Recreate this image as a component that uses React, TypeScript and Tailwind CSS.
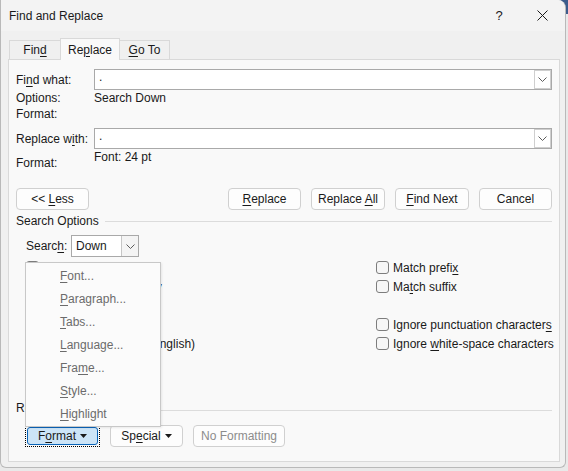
import React from "react";

const font = { fontFamily: '"Liberation Sans", Arial, sans-serif' };

function U({ children }: { children: React.ReactNode }) {
  return <span className="underline underline-offset-2">{children}</span>;
}

function Chevron() {
  return (
    <svg width="9" height="5" viewBox="0 0 9 5" className="text-[#5c5c5c]">
      <path d="M0.5 0.5 L4.5 4.5 L8.5 0.5" fill="none" stroke="currentColor" strokeWidth="1" />
    </svg>
  );
}

function ComboInput() {
  return (
    <div className="flex-1 h-[21px] bg-white border border-[#a9a9a9] flex items-center">
      <span className="flex-1 pl-[4px] leading-none pb-[6px]">.</span>
      <div className="w-[17px] h-[19px] border border-[#cfcfcf] bg-white flex items-center justify-center">
        <Chevron />
      </div>
    </div>
  );
}

function Btn({
  children,
  w,
  className = "",
}: {
  children: React.ReactNode;
  w: string;
  className?: string;
}) {
  return (
    <div
      className={`${w} h-[22px] rounded-[4px] border border-[#d0d0d0] bg-[#fdfdfd] flex items-center justify-center whitespace-pre ${className}`}
    >
      <span className="flex items-center">{children}</span>
    </div>
  );
}

function Check({ children }: { children: React.ReactNode }) {
  return (
    <div className="h-[19px] flex items-center gap-[4px] whitespace-nowrap">
      <div className="w-[13px] h-[13px] shrink-0 rounded-[3px] border border-[#7d7d7d] bg-[#f6f6f6]" />
      <span>{children}</span>
    </div>
  );
}

function Caret() {
  return (
    <svg width="7" height="4" viewBox="0 0 7 4" className="ml-[4px]">
      <path d="M0 0 H7 L3.5 4 Z" fill="#1a1a1a" />
    </svg>
  );
}

const menuItems: [string, string, string][] = [
  ["", "F", "ont..."],
  ["", "P", "aragraph..."],
  ["", "T", "abs..."],
  ["", "L", "anguage..."],
  ["Fra", "m", "e..."],
  ["", "S", "tyle..."],
  ["", "H", "ighlight"],
];

export default function App() {
  return (
    <div
      className="w-[568px] h-[471px] bg-[linear-gradient(to_bottom,#3b5c8c_0px,#3b5c8c_14px,#e9e9e9_14px)] text-[12px] text-[#1a1a1a] overflow-hidden"
      style={font}
    >
      <div className="w-[566px] h-[468px] bg-[#f0f0f0] border-l border-r border-b border-[#b9b9b9] rounded-tr-[8px] rounded-b-[6px] flex flex-col overflow-hidden">
        {/* title bar */}
        <div className="h-[31px] bg-[#f3f3f3] flex items-center pl-[8px] shrink-0">
          <span className="flex-1 text-[12px]">Find and Replace</span>
          <span className="w-[20px] text-center text-[13px] mr-[28px]">?</span>
          <svg width="11" height="11" viewBox="0 0 11 11" className="mr-[17px]">
            <path d="M0.5 0.5 L10.5 10.5 M10.5 0.5 L0.5 10.5" stroke="#1a1a1a" strokeWidth="1" />
          </svg>
        </div>

        {/* tabs */}
        <div className="flex pl-[8px] pt-[7px] items-start h-[28px] shrink-0">
          <div className="w-[51px] mt-[2px] h-[20px] border border-r-0 border-[#d9d9d9] flex items-center justify-center">
            <span>
              Fin<U>d</U>
            </span>
          </div>
          <div className="w-[60px] h-[22px] border border-b-0 border-[#d9d9d9] bg-[#f9f9f9] flex items-center justify-center relative z-10">
            <span>
              Re<U>p</U>lace
            </span>
          </div>
          <div className="w-[50px] mt-[2px] h-[20px] border border-l-0 border-[#d9d9d9] flex items-center justify-center">
            <span>
              <U>G</U>o To
            </span>
          </div>
        </div>

        {/* panel */}
        <div className="ml-[7px] w-[552px] h-[403px] border border-[#d9d9d9] bg-[#f9f9f9] relative flex flex-col px-[7px]">
          <div className="mt-[9px] h-[21px] flex items-center">
            <span className="w-[78px]">
              Fi<U>n</U>d what:
            </span>
            <ComboInput />
          </div>
          <div className="h-[16px] flex items-center">
            <span className="w-[78px]">Options:</span>
            <span>Search Down</span>
          </div>
          <div className="h-[16px] flex items-center">
            <span className="w-[78px]">Format:</span>
          </div>

          <div className="mt-[6px] h-[21px] flex items-center">
            <span className="w-[78px]">
              Replace w<U>i</U>th:
            </span>
            <ComboInput />
          </div>
          <div className="h-[22px] flex items-start">
            <span className="w-[78px] pt-[6px] leading-[16px]">Format:</span>
            <span className="leading-[16px]">Font: 24 pt</span>
          </div>

          <div className="mt-[17px] flex items-center">
            <Btn w="w-[73px]">
              <span>
                &lt;&lt; <U>L</U>ess
              </span>
            </Btn>
            <div className="flex-1" />
            <Btn w="w-[73px]">
              <span>
                <U>R</U>eplace
              </span>
            </Btn>
            <Btn w="w-[74px]" className="ml-[10px]">
              <span>
                Replace <U>A</U>ll
              </span>
            </Btn>
            <Btn w="w-[74px]" className="ml-[10px]">
              <span>
                <U>F</U>ind Next
              </span>
            </Btn>
            <Btn w="w-[73px]" className="ml-[10px]">
              Cancel
            </Btn>
          </div>

          <div className="mt-[3px] h-[16px] flex items-center">
            <span>Search Options</span>
            <div className="flex-1 h-px bg-[#dcdcdc] ml-[6px]" />
          </div>

          <div className="mt-[6px] ml-[10px] flex items-center h-[22px]">
            <span className="w-[45px]">
              Searc<U>h</U>:
            </span>
            <div className="w-[68px] h-[22px] border border-[#a9a9a9] bg-white flex items-center">
              <span className="flex-1 pl-[4px]">Down</span>
              <div className="w-[17px] h-[20px] border-l border-[#c6c6c6] bg-[#f4f4f4] flex items-center justify-center">
                <Chevron />
              </div>
            </div>
          </div>

          <div className="mt-[1px] ml-[10px] grid grid-cols-[350px_1fr]">
            <div className="flex flex-col">
              <Check>Match case</Check>
              <Check>Find whole words only</Check>
              <Check>Use wildcards</Check>
              <Check>Sounds like (English)</Check>
              <Check>Find all word forms (English)</Check>
            </div>
            <div className="flex flex-col">
              <Check>
                Match prefi<U>x</U>
              </Check>
              <Check>
                Ma<U>t</U>ch suffix
              </Check>
              <div className="h-[19px]" />
              <Check>
                Ignore punctuation character<U>s</U>
              </Check>
              <Check>
                Ignore <U>w</U>hite-space characters
              </Check>
            </div>
          </div>

          <div className="mt-[47px] h-[16px] flex items-center">
            <span>Replace</span>
            <div className="flex-1 h-px bg-[#dcdcdc] ml-[6px] mt-[4px]" />
          </div>

          <div className="mt-[9px] ml-[9px] flex items-center">
            <div className="w-[75px] h-[22px] border border-dotted border-black p-px">
              <div className="w-full h-full rounded-[3px] border border-[#0a64b8] bg-[#cce4f7] flex items-center justify-center">
                <span>
                  F<U>o</U>rmat
                </span>
                <Caret />
              </div>
            </div>
            <Btn w="w-[73px]" className="ml-[10px]">
              <span>
                Sp<U>e</U>cial
              </span>
              <Caret />
            </Btn>
            <Btn w="w-[92px]" className="ml-[10px] text-[#8c8c8c] bg-[#f9f9f9]">
              No Formatting
            </Btn>
          </div>

          {/* popup menu */}
          <div className="absolute left-[16px] top-[202px] w-[136px] h-[165px] bg-[#fbfbfb] border border-[#c8c8c8] shadow-[1px_1px_2px_rgba(0,0,0,0.08)] flex flex-col pt-px text-[#6b6b6b] z-20">
            {menuItems.map(([a, b, c]) => (
              <div key={b + c} className="h-[23px] flex items-center pl-[34px]">
                <span>
                  {a}
                  <U>{b}</U>
                  {c}
                </span>
              </div>
            ))}
          </div>
        </div>
      </div>
    </div>
  );
}
